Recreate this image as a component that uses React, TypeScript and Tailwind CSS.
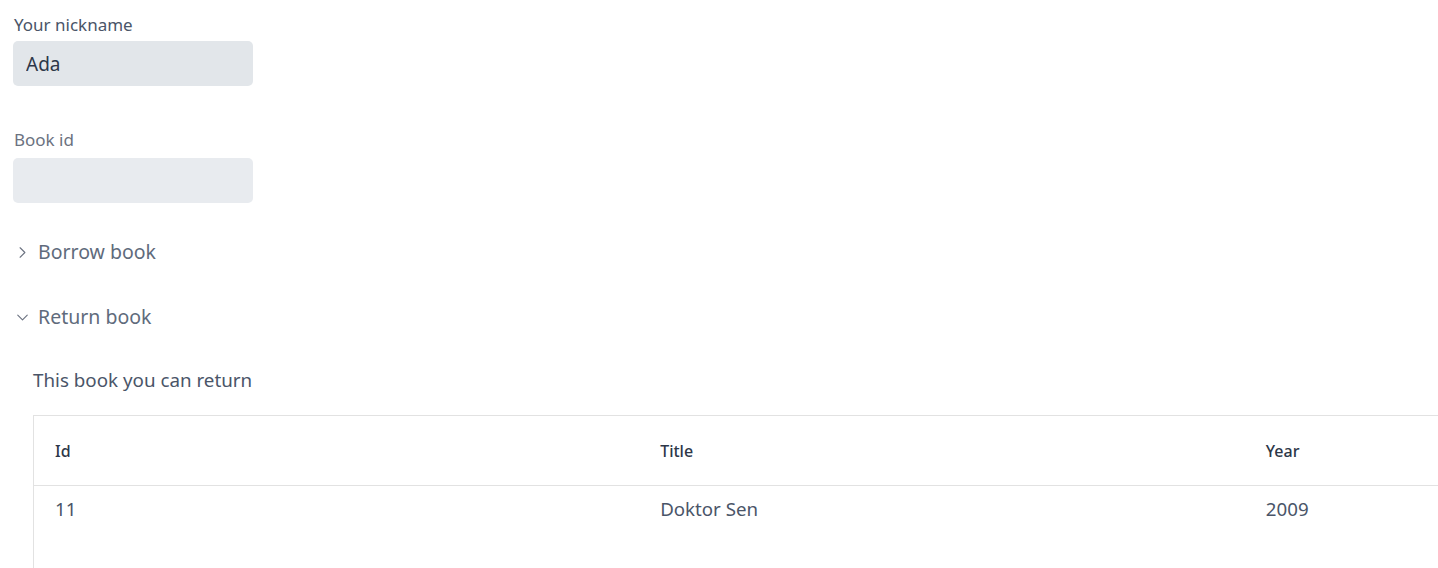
import { ChevronRight, ChevronDown } from "lucide-react";

const rows = [{ id: 11, title: "Doktor Sen", year: 2009 }];

export default function App() {
  return (
    <div
      className="w-[1438px] h-[568px] overflow-hidden bg-white"
      style={{ fontFamily: '"Noto Sans", "Open Sans", sans-serif' }}
    >
      <div className="pt-[14px] pl-[13px]">
        {/* nickname */}
        <label className="block text-[17px] text-[#4a5568] pl-[1px] leading-[22px]">Your nickname</label>
        <input
          defaultValue="Ada"
          className="mt-[5px] h-[45px] w-[240px] rounded-[5px] bg-[#e2e6ea] px-[13px] text-[19px] text-[#2d3748] focus:outline-none"
        />
        {/* book id */}
        <label className="block mt-[43px] text-[17px] text-[#6b7280] pl-[1px] leading-[22px]">Book id</label>
        <input className="mt-[7px] h-[45px] w-[240px] rounded-[5px] bg-[#e8ebef] px-[13px] text-[19px] focus:outline-none" />

        {/* accordion */}
        <div className="mt-[35px] flex items-center gap-[6px] h-[28px] text-[19.5px] text-[#5f6b7c]">
          <ChevronRight size={19} strokeWidth={1.4} className="text-[#6b7280]" />
          <span>Borrow book</span>
        </div>
        <div className="mt-[37px] flex items-center gap-[6px] h-[28px] text-[19.5px] text-[#5f6b7c]">
          <ChevronDown size={19} strokeWidth={1.4} className="text-[#6b7280]" />
          <span>Return book</span>
        </div>

        <div className="pl-[20px]">
          <p className="mt-[36px] text-[18.8px] text-[#4a5568] leading-[26px]">This book you can return</p>
          <table className="mt-[22px] w-[1818px] border-collapse border border-[#e2e2e2] text-left">
            <thead>
              <tr className="h-[70px] border-b border-[#e2e2e2]">
                <th className="w-[606px] pl-[21px] text-[16px] font-medium text-[#2d3748]">Id</th>
                <th className="w-[606px] pl-[21px] text-[16px] font-medium text-[#2d3748]">Title</th>
                <th className="w-[606px] pl-[21px] text-[16px] font-medium text-[#2d3748]">Year</th>
              </tr>
            </thead>
            <tbody>
              {rows.map((r) => (
                <tr key={r.id} className="h-[90px] align-top">
                  <td className="pl-[21px] pt-[9px] text-[18.7px] text-[#4a5568]">{r.id}</td>
                  <td className="pl-[21px] pt-[9px] text-[18.7px] text-[#4a5568]">{r.title}</td>
                  <td className="pl-[21px] pt-[9px] text-[18.7px] text-[#4a5568]">{r.year}</td>
                </tr>
              ))}
            </tbody>
          </table>
        </div>
      </div>
    </div>
  );
}
